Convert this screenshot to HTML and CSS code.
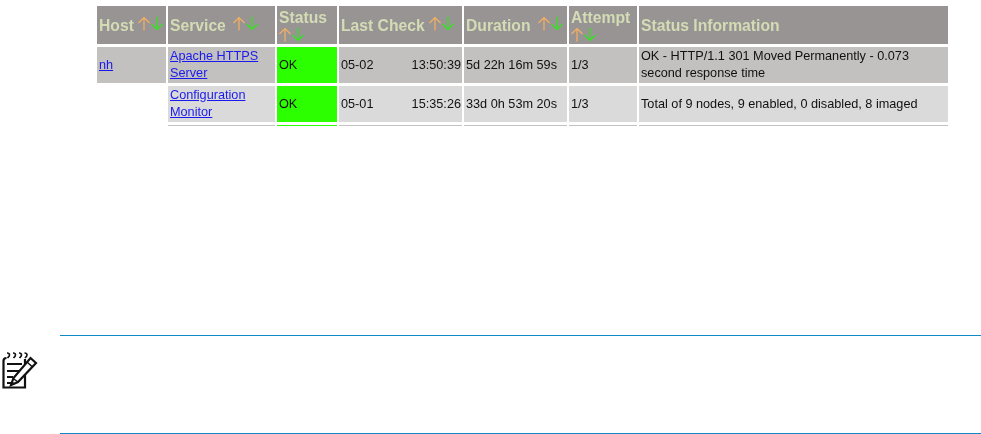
FILE: index.html
```html
<!DOCTYPE html>
<html lang="en">
<head>
<meta charset="utf-8">
<title>Service status</title>
<link rel="stylesheet" href="styles.css">
</head>
<body>
<svg class="defs" width="0" height="0" aria-hidden="true">
  <symbol id="arrows" viewBox="0 0 25 15">
    <path d="M6 14.500V1.500M.5 7l5.500-5.500 5.500 5.500" fill="none" stroke="#f6b060" stroke-width="1.200"/>
    <path d="M19 .5v13M13.500 8l5.500 5.500 5.500-5.500" fill="none" stroke="#2fe81a" stroke-width="1.200"/>
  </symbol>
</svg>
<div class="shot">
  <table class="status">
    <colgroup>
      <col class="c-host"><col class="c-service"><col class="c-state"><col class="c-check"><col class="c-dur"><col class="c-att"><col class="c-info">
    </colgroup>
    <thead>
      <tr>
        <th>Host <svg class="sort"><use href="#arrows"/></svg></th>
        <th>Service <svg class="sort wide"><use href="#arrows"/></svg></th>
        <th class="stack">Status<br><svg class="sort"><use href="#arrows"/></svg></th>
        <th>Last Check <svg class="sort"><use href="#arrows"/></svg></th>
        <th>Duration <svg class="sort wide"><use href="#arrows"/></svg></th>
        <th class="stack">Attempt<br><svg class="sort"><use href="#arrows"/></svg></th>
        <th>Status Information</th>
      </tr>
    </thead>
    <tbody>
      <tr class="odd">
        <td><a href="#">nh</a></td>
        <td><a href="#">Apache HTTPS Server</a></td>
        <td class="ok">OK</td>
        <td><div class="when"><span>05-02</span><span>13:50:39</span></div></td>
        <td>5d 22h 16m 59s</td>
        <td>1/3</td>
        <td>OK - HTTP/1.1 301 Moved Permanently - 0.073 second response time</td>
      </tr>
      <tr class="even">
        <td class="blank"></td>
        <td><a href="#">Configuration Monitor</a></td>
        <td class="ok">OK</td>
        <td><div class="when"><span>05-01</span><span>15:35:26</span></div></td>
        <td>33d 0h 53m 20s</td>
        <td>1/3</td>
        <td>Total of 9 nodes, 9 enabled, 0 disabled, 8 imaged</td>
      </tr>
      <tr class="odd">
        <td class="blank"></td>
        <td></td>
        <td class="ok"></td>
        <td></td>
        <td></td>
        <td></td>
        <td></td>
      </tr>
    </tbody>
  </table>
</div>
<div class="note">
  <svg class="note-icon" width="38" height="40" viewBox="0 0 38 40" fill="none" stroke="#111" stroke-width="2.200">
    <path d="M25 17V9M25 24v13.500H3.500V11c0-2 1-3 3-3"/>
    <path d="M7.500 8c1-1 2-1.500 2-3s-1-2-2.500-2M13.500 8c1-1 2-1.500 2-3s-1-2-2.500-2M19.500 8c1-1 2-1.500 2-3s-1-2-2.500-2M25 8c1-1 2-1.500 2-3s-1-2-2.500-2" stroke-width="1.600"/>
    <path d="M7 14h15M7 21h12M7 27h6M7 33h4" stroke-width="2.200"/>
    <path d="M30.500 8l5.500 5-18 19-7 3 2.500-7z" fill="#fff"/>
    <path d="M12.500 28l5.500 4M27 12l5.500 5" stroke-width="1.500"/>
    <path d="M10 36l2-5 3 3z" fill="#111" stroke="none"/>
  </svg>
</div>
</body>
</html>
```

FILE: styles.css
```css
html, body {
  margin: 0;
  padding: 0;
  background: #fff;
}
body {
  width: 981px;
  height: 434px;
  overflow: hidden;
  font-family: "Liberation Sans", Arial, sans-serif;
}
.defs {
  position: absolute;
}
.shot {
  height: 120px;
  margin: 6px 0 0 95px;
  width: 855px;
  overflow: hidden;
}
.status {
  width: 855px;
  table-layout: fixed;
  border-collapse: separate;
  border-spacing: 2px 3px;
  margin: -3px 0 0 0;
  font-size: 12.700px;
  line-height: 17px;
  color: #111;
  filter: blur(0.3px);
}
.status col.c-host { width: 69px; }
.status col.c-service { width: 107px; }
.status col.c-state { width: 60px; }
.status col.c-check { width: 123px; }
.status col.c-dur { width: 103px; }
.status col.c-att { width: 68px; }
.status th {
  background: #989494;
  color: #d3dcb4;
  font-size: 15.700px;
  font-weight: bold;
  line-height: 17px;
  text-align: left;
  padding: 0 2px;
  height: 38px;
  white-space: nowrap;
  box-sizing: border-box;
}
.sort {
  width: 25px;
  height: 15px;
  vertical-align: 0;
  margin-left: 0;
}
.sort.wide {
  margin-left: 3px;
}
.stack .sort {
  display: block;
  margin-top: 1px;
}
.status td {
  height: 36px;
  padding: 0 1px 0 2px;
  vertical-align: middle;
  box-sizing: border-box;
}
.odd td { background: #c3c0c0; }
.even td { background: #dadada; }
.status td.blank { background: #fff; }
.status td.ok { background: #2cff00; }
.when {
  display: flex;
  justify-content: space-between;
}
.status a { color: #1a1aee; text-decoration: underline; }
.note {
  position: absolute;
  left: 60px;
  right: 0;
  top: 335px;
  height: 97px;
  border-top: 1px solid #1089c4;
  border-bottom: 1px solid #1089c4;
}
.note-icon {
  position: absolute;
  left: -60px;
  top: 14px;
}
```
